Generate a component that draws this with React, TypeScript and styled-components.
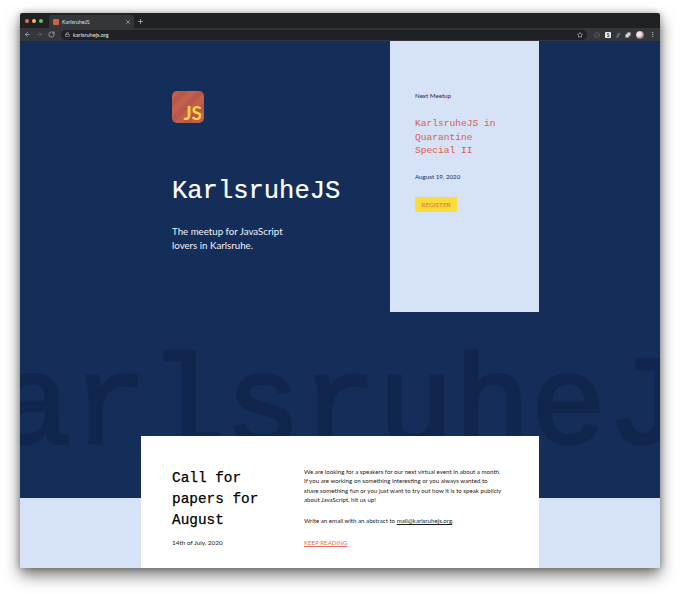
import React from 'react'
import styled, { createGlobalStyle } from 'styled-components'
import { ArrowLeft, ArrowRight, RotateCw, Lock, Star, Puzzle, MoreVertical, Plus, X, Info } from 'lucide-react'

const GlobalStyle = createGlobalStyle`
  html, body { margin: 0; padding: 0; background: #ffffff; }
  body { width: 680px; height: 594px; overflow: hidden; font-family: Lato, "Noto Sans", sans-serif; }
`

const mono = `"Liberation Mono", "DejaVu Sans Mono", monospace`

const Desktop = styled.div`
  padding: 13px 20px 26px;
`

const Window = styled.div`
  width: 640px;
  height: 555px;
  display: flex;
  flex-direction: column;
  border-radius: 2px;
  box-shadow: 0 7px 16px rgba(0, 0, 0, 0.55), 0 0 6px rgba(0, 0, 0, 0.25);
  overflow: hidden;
`

const TabBar = styled.div`
  height: 15px;
  background: #202124;
  display: flex;
  align-items: flex-end;
  padding-left: 5px;
`

const Dot = styled.span<{ color: string }>`
  width: 4px;
  height: 4px;
  border-radius: 50%;
  background: ${p => p.color};
  margin-right: 3px;
  align-self: center;
`

const Tab = styled.div`
  width: 85px;
  height: 13px;
  margin-left: 3px;
  background: #35363a;
  border-radius: 3px 3px 0 0;
  display: flex;
  align-items: center;
  padding: 0 3px 0 4px;
  box-sizing: border-box;
  color: #dee1e6;
  font-size: 5.4px;
`

const Favicon = styled.span`
  width: 6px;
  height: 6px;
  background: #c8643f;
  border-radius: 1px;
  margin-right: 3px;
`

const TabTitle = styled.span`
  flex: 1;
`

const NewTab = styled.span`
  display: flex;
  margin: 0 0 3px 3px;
  color: #dee1e6;
`

const Toolbar = styled.div`
  height: 13px;
  background: #35363a;
  display: flex;
  align-items: center;
  gap: 5px;
  padding: 0 4px;
  color: #c4c7cc;
  box-sizing: border-box;
`

const AddressBar = styled.div`
  flex: 1;
  height: 10px;
  border-radius: 5px;
  background: #202124;
  display: flex;
  align-items: center;
  gap: 3px;
  padding: 0 4px;
  color: #e8eaed;
  font-size: 5.6px;
  margin: 0 2px 0 1px;
`

const Url = styled.span`
  flex: 1;
`

const Extension = styled.span`
  width: 6px;
  height: 6px;
  border-radius: 1px;
  background: #e8eaed;
  color: #35363a;
  font-size: 5px;
  line-height: 6px;
  text-align: center;
  font-weight: 700;
`

const Slashes = styled.span`
  font-size: 6px;
  font-style: italic;
  font-weight: 700;
  color: #9aa0a6;
`

const Avatar = styled.span`
  width: 8px;
  height: 8px;
  border-radius: 50%;
  background: radial-gradient(circle at 40% 40%, #f0e6e6 30%, #8c6a74 70%);
`

const Page = styled.main`
  position: relative;
  flex: 1;
  overflow: hidden;
  background: linear-gradient(#152e59 457px, #d6e2f5 457px);
  padding: 0 121px;
`

const Watermark = styled.div`
  position: absolute;
  left: -101px;
  top: 318px;
  font-family: ${mono};
  font-size: 127px;
  line-height: 100px;
  letter-spacing: 0.2px;
  color: #10264c;
  -webkit-text-stroke: 3px #10264c;
  white-space: nowrap;
`

const Hero = styled.section`
  position: relative;
  display: flex;
  justify-content: space-between;
  height: 395px;
`

const Intro = styled.div`
  padding: 50px 0 0 31px;
`

const Logo = styled.div`
  width: 32px;
  height: 32px;
  border-radius: 5px;
  background: repeating-linear-gradient(135deg, #c2604a 0 6px, #b9584a 6px 12px);
  color: #fcd53f;
  font-size: 19px;
  font-weight: 700;
  display: flex;
  align-items: flex-end;
  justify-content: flex-end;
  line-height: 21px;
  padding-right: 2px;
  box-sizing: border-box;
`

const SiteTitle = styled.h1`
  margin: 53px 0 0;
  font-family: ${mono};
  font-size: 25.5px;
  line-height: 32px;
  font-weight: 400;
  color: #ffffff;
  white-space: nowrap;
  -webkit-text-stroke: 0.2px #ffffff;
`

const Tagline = styled.p`
  margin: 16px 0 0;
  font-size: 9.7px;
  line-height: 14px;
  color: #eef2fa;
`

const MeetupCard = styled.aside`
  width: 149px;
  height: 271px;
  background: #d6e2f5;
  box-sizing: border-box;
  padding: 50px 25px 0;
  color: #152e59;
`

const Label = styled.div`
  font-size: 6.2px;
  line-height: 10px;
`

const MeetupTitle = styled.h2`
  margin: 16px 0 0;
  font-family: ${mono};
  font-size: 9.6px;
  line-height: 13.7px;
  font-weight: 400;
  color: #d9604c;
`

const MeetupDate = styled.div`
  margin-top: 14px;
  font-size: 6.2px;
  line-height: 10px;
`

const RegisterButton = styled.a`
  display: inline-block;
  margin-top: 15px;
  width: 42px;
  height: 15px;
  background: #fcdb3c;
  border-radius: 1px;
  color: #e08a3a;
  font-size: 6.4px;
  font-weight: 700;
  line-height: 15px;
  text-align: center;
`

const PostCard = styled.article`
  position: relative;
  height: 132px;
  background: #ffffff;
  display: flex;
  padding: 31px 31px 0;
  box-sizing: border-box;
`

const PostHead = styled.div`
  width: 132px;
  flex-shrink: 0;
`

const PostTitle = styled.h3`
  margin: 1px 0 0;
  width: 100px;
  font-family: ${mono};
  font-size: 14.4px;
  line-height: 21px;
  font-weight: 400;
  color: #000000;
  -webkit-text-stroke: 0.25px #000000;
`

const PostDate = styled.div`
  margin-top: 7px;
  font-size: 6.4px;
  line-height: 10px;
  color: #222222;
`

const PostBody = styled.div`
  flex: 1;
  font-size: 6.15px;
  line-height: 9.3px;
  color: #1a1a1a;
  white-space: nowrap;
`

const Paragraph = styled.p`
  margin: 0 0 12.3px;
`

const Mail = styled.a`
  color: #1a1a1a;
  text-decoration: underline;
`

const KeepReading = styled.a`
  color: #e0705c;
  text-decoration: underline;
`

export default function App() {
  return (
    <>
      <GlobalStyle />
      <Desktop>
        <Window>
          <TabBar>
            <Dot color="#ec6a5e" />
            <Dot color="#f4bf4f" />
            <Dot color="#61c554" />
            <Tab>
              <Favicon />
              <TabTitle>KarlsruheJS</TabTitle>
              <X size={6} />
            </Tab>
            <NewTab>
              <Plus size={7} />
            </NewTab>
          </TabBar>
          <Toolbar>
            <ArrowLeft size={7} />
            <ArrowRight size={7} color="#6f7276" />
            <RotateCw size={7} />
            <AddressBar>
              <Lock size={5} />
              <Url>karlsruhejs.org</Url>
              <Star size={6} />
            </AddressBar>
            <Info size={6} color="#6f7276" />
            <Extension>S</Extension>
            <Slashes>//</Slashes>
            <Puzzle size={6} fill="#e8eaed" />
            <Avatar />
            <MoreVertical size={7} />
          </Toolbar>
          <Page>
            <Watermark>KarlsruheJS</Watermark>
            <Hero>
              <Intro>
                <Logo>JS</Logo>
                <SiteTitle>KarlsruheJS</SiteTitle>
                <Tagline>
                  The meetup for JavaScript
                  <br />
                  lovers in Karlsruhe.
                </Tagline>
              </Intro>
              <MeetupCard>
                <Label>Next Meetup</Label>
                <MeetupTitle>
                  KarlsruheJS in
                  <br />
                  Quarantine
                  <br />
                  Special II
                </MeetupTitle>
                <MeetupDate>August 19, 2020</MeetupDate>
                <RegisterButton>REGISTER</RegisterButton>
              </MeetupCard>
            </Hero>
            <PostCard>
              <PostHead>
                <PostTitle>Call for papers for August</PostTitle>
                <PostDate>14th of July, 2020</PostDate>
              </PostHead>
              <PostBody>
                <Paragraph>
                  We are looking for a speakers for our next virtual event in about a month.
                  <br />
                  If you are working on something interesting or you always wanted to
                  <br />
                  share something fun or you just want to try out how it is to speak publicly
                  <br />
                  about JavaScript, hit us up!
                </Paragraph>
                <Paragraph>
                  Write an email with an abstract to <Mail>mail@karlsruhejs.org</Mail>.
                </Paragraph>
                <KeepReading>KEEP READING</KeepReading>
              </PostBody>
            </PostCard>
          </Page>
        </Window>
      </Desktop>
    </>
  )
}
